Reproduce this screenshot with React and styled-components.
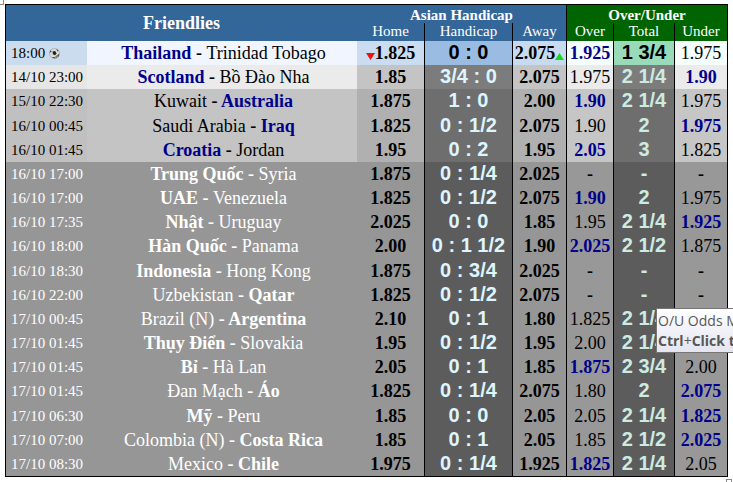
import React from "react";
import styled, { createGlobalStyle, css } from "styled-components";

const GlobalStyle = createGlobalStyle`
  body {
    margin: 0;
    background: #fff;
    font-family: "Liberation Serif", "Times New Roman", serif;
  }
`;

const tones = {
  live: {
    time: "#cadcee",
    teams: "#f0f5ff",
    home: "#cadcf0",
    handicap: "#9abce2",
    away: "#c8daf0",
    odds: "#f5fdfd",
    total: "#99dbb9",
    text: "#000",
    handicapText: "#000",
    totalText: "#000"
  },
  next: {
    time: "#e6e6e6",
    teams: "#ebebeb",
    home: "#c4c4c4",
    handicap: "#7c7c7c",
    away: "#c4c4c4",
    odds: "#ebebeb",
    total: "#7c7c7c",
    text: "#000",
    handicapText: "#dcf5ff",
    totalText: "#cdebe0"
  },
  soon: {
    time: "#c0c0c0",
    teams: "#c4c4c4",
    home: "#b0b0b0",
    handicap: "#6e6e6e",
    away: "#b0b0b0",
    odds: "#c6c6c6",
    total: "#6e6e6e",
    text: "#000",
    handicapText: "#dcf5ff",
    totalText: "#cdebe0"
  },
  later: {
    time: "#969696",
    teams: "#969696",
    home: "#969696",
    handicap: "#5c5c5c",
    away: "#969696",
    odds: "#989898",
    total: "#5c5c5c",
    text: "#fff",
    handicapText: "#dcf5ff",
    totalText: "#cdebe0"
  }
};

const Page = styled.main`
  position: relative;
  padding: 4px 5px 6px;
  overflow: hidden;
`;

const Board = styled.table`
  width: 100%;
  table-layout: fixed;
  border-collapse: separate;
  border-spacing: 0;
  border: 1px solid #000;
  box-sizing: border-box;
`;

const Col = styled.col`
  width: ${props => props.$width};
`;

const HeadCell = styled.th`
  padding: 0;
  height: 18px;
  font-size: 15px;
  line-height: 16px;
  font-weight: ${props => (props.$sub ? "normal" : "bold")};
  vertical-align: ${props => (props.$sub ? "top" : "bottom")};
  color: #fff;
  background: ${props => (props.$green ? "#006400" : "#336699")};
  white-space: nowrap;
  ${props =>
    props.$line &&
    css`
      border-left: 1px solid #000;
    `}
`;

const League = styled(HeadCell)`
  font-size: 18px;
  vertical-align: middle;
`;

const Row = styled.tr`
  height: 24px;
  &:nth-child(6n + 4) {
    height: 25px;
  }
`;

const Cell = styled.td`
  padding: 0;
  text-align: center;
  white-space: nowrap;
  line-height: 22px;
  font-size: 18px;
`;

const TimeCell = styled(Cell)`
  padding-left: 5px;
  text-align: left;
  font-size: 15px;
  background: ${props => tones[props.$tone].time};
  color: ${props => tones[props.$tone].text};
`;

const TeamsCell = styled(Cell)`
  padding-left: 3px;
  background: ${props => tones[props.$tone].teams};
  color: ${props => tones[props.$tone].text};
`;

const Team = styled.span`
  font-weight: ${props => (props.$favourite ? "bold" : "normal")};
  color: ${props =>
    props.$favourite && props.$tone !== "later" ? "#00008b" : "inherit"};
`;

const OddsCell = styled(Cell)`
  font-weight: ${props => (props.$bold ? "bold" : "normal")};
  color: ${props =>
    props.$low ? "#00008b" : "#000"};
  background: ${props => tones[props.$tone][props.$kind]};
  ${props =>
    props.$line &&
    css`
      border-left: 1px solid #000;
    `}
`;

const LineCell = styled(Cell)`
  padding-bottom: 2px;
  border-left: 1px solid #000;
  font-family: "Liberation Sans", Arial, sans-serif;
  font-size: 20px;
  font-weight: bold;
  background: ${props => tones[props.$tone][props.$kind]};
  color: ${props => tones[props.$tone][`${props.$kind}Text`]};
`;

const Ball = styled.svg`
  width: 11px;
  height: 11px;
  margin-left: 4px;
  vertical-align: -1px;
`;

const Arrow = styled.svg`
  width: 9px;
  height: 7px;
  vertical-align: -1px;
`;

const Tooltip = styled.div`
  position: absolute;
  top: 308px;
  right: 0;
  width: 77px;
  height: 45px;
  box-sizing: border-box;
  padding: 2px 0 0 1px;
  overflow: hidden;
  border: 1px solid #767676;
  border-right: 0;
  background: linear-gradient(#fff, #e4e5f0);
  color: #575757;
  font-family: "Open Sans", "Noto Sans", sans-serif;
  font-size: 14px;
  line-height: 20px;
  white-space: nowrap;
`;

const MoveHandle = styled.span`
  position: absolute;
  top: 0;
  left: 0;
  width: 3px;
  height: 4px;
  border: solid #8a8a8a;
  border-width: 0 1px 1px 0;
`;

const SizeHandle = styled.span`
  position: absolute;
  right: 1px;
  bottom: 0;
  width: 4px;
  height: 3px;
  border: 1px solid #8a8a8a;
  border-bottom: 0;
`;

// [tone, time, first team, second team, favourite, home, handicap, away, over, total, under, low side]
const matches = [
  ["live", "18:00", "Thailand", "Trinidad Tobago", 1, "1.825", "0 : 0", "2.075", "1.925", "1 3/4", "1.975", "over"],
  ["next", "14/10 23:00", "Scotland", "Bồ Đào Nha", 1, "1.85", "3/4 : 0", "2.075", "1.975", "2 1/4", "1.90", "under"],
  ["soon", "15/10 22:30", "Kuwait", "Australia", 2, "1.875", "1 : 0", "2.00", "1.90", "2 1/4", "1.975", "over"],
  ["soon", "16/10 00:45", "Saudi Arabia", "Iraq", 2, "1.825", "0 : 1/2", "2.075", "1.90", "2", "1.975", "under"],
  ["soon", "16/10 01:45", "Croatia", "Jordan", 1, "1.95", "0 : 2", "1.95", "2.05", "3", "1.825", "over"],
  ["later", "16/10 17:00", "Trung Quốc", "Syria", 1, "1.875", "0 : 1/4", "2.025", "-", "-", "-", ""],
  ["later", "16/10 17:00", "UAE", "Venezuela", 1, "1.825", "0 : 1/2", "2.075", "1.90", "2", "1.975", "over"],
  ["later", "16/10 17:35", "Nhật", "Uruguay", 1, "2.025", "0 : 0", "1.85", "1.95", "2 1/4", "1.925", "under"],
  ["later", "16/10 18:00", "Hàn Quốc", "Panama", 1, "2.00", "0 : 1 1/2", "1.90", "2.025", "2 1/2", "1.875", "over"],
  ["later", "16/10 18:30", "Indonesia", "Hong Kong", 1, "1.875", "0 : 3/4", "2.025", "-", "-", "-", ""],
  ["later", "16/10 22:00", "Uzbekistan", "Qatar", 2, "1.825", "0 : 1/2", "2.075", "-", "-", "-", ""],
  ["later", "17/10 00:45", "Brazil (N)", "Argentina", 2, "2.10", "0 : 1", "1.80", "1.825", "2 1/4", "", ""],
  ["later", "17/10 01:45", "Thụy Điển", "Slovakia", 1, "1.95", "0 : 1/2", "1.95", "2.00", "2 1/4", "", ""],
  ["later", "17/10 01:45", "Bỉ", "Hà Lan", 1, "2.05", "0 : 1", "1.85", "1.875", "2 3/4", "2.00", "over"],
  ["later", "17/10 01:45", "Đan Mạch", "Áo", 2, "1.825", "0 : 1/4", "2.075", "1.80", "2", "2.075", "under"],
  ["later", "17/10 06:30", "Mỹ", "Peru", 1, "1.85", "0 : 0", "2.05", "2.05", "2 1/4", "1.825", "under"],
  ["later", "17/10 07:00", "Colombia (N)", "Costa Rica", 2, "1.85", "0 : 1", "2.05", "1.85", "2 1/2", "2.025", "under"],
  ["later", "17/10 08:30", "Mexico", "Chile", 2, "1.975", "0 : 1/4", "1.925", "1.825", "2 1/4", "2.05", "over"]
];

const BallIcon = () => (
  <Ball viewBox="0 0 11 11" aria-hidden="true">
    <circle cx="5.5" cy="5.5" r="5" fill="#dcdcdc" stroke="#9a9a9a" strokeWidth="0.6" />
    <path d="M3.6 3.6 6.2 3 7.6 5.4 6 7.2 3.8 6.2Z" fill="#222" />
    <path d="M0.6 4.6 1.8 2 2.6 4ZM7 0.8 9.6 2.4 8.8 3.6ZM2.6 9.4 5.4 9 6.4 10.6ZM8.4 7.4 10.4 5.4 9.4 9Z" fill="#333" />
    <path d="M6.4 8.2 9.6 6 8.4 9.4 6.4 10.4Z" fill="#777" />
  </Ball>
);

const DownIcon = () => (
  <Arrow viewBox="0 0 9 7" aria-hidden="true">
    <path d="M0 0H9L4.5 7Z" fill="#ee1111" />
  </Arrow>
);

const UpIcon = () => (
  <Arrow viewBox="0 0 9 7" aria-hidden="true">
    <path d="M0 7H9L4.5 0Z" fill="#11dd11" />
  </Arrow>
);

const Match = ({ match }) => {
  const [tone, time, first, second, favourite, home, handicap, away, over, total, under, low] = match;
  const live = tone === "live";
  const empty = over === "-";
  return (
    <Row>
      <TimeCell $tone={tone}>
        {time}
        {live && <BallIcon />}
      </TimeCell>
      <TeamsCell $tone={tone}>
        <Team $tone={tone} $favourite={favourite === 1}>{first}</Team>
        <b> - </b>
        <Team $tone={tone} $favourite={favourite === 2}>{second}</Team>
      </TeamsCell>
      <OddsCell $tone={tone} $kind="home" $bold>
        {live && <DownIcon />}
        {home}
      </OddsCell>
      <LineCell $tone={tone} $kind="handicap">{handicap}</LineCell>
      <OddsCell $tone={tone} $kind="away" $bold $line>
        {away}
        {live && <UpIcon />}
      </OddsCell>
      <OddsCell $tone={tone} $kind="odds" $line $bold={empty || low === "over"} $low={low === "over"}>
        {over}
      </OddsCell>
      <LineCell $tone={tone} $kind="total">{total}</LineCell>
      <OddsCell $tone={tone} $kind="odds" $line $bold={empty || low === "under"} $low={low === "under"}>
        {under}
      </OddsCell>
    </Row>
  );
};

export default () => (
  <Page>
    <GlobalStyle />
    <Board>
      <colgroup>
        <Col $width="81px" />
        <Col />
        <Col $width="67px" />
        <Col $width="88px" />
        <Col $width="54px" />
        <Col $width="47px" />
        <Col $width="61px" />
        <Col $width="53px" />
      </colgroup>
      <thead>
        <tr>
          <League colSpan="2" rowSpan="2">Friendlies</League>
          <HeadCell colSpan="3">Asian Handicap</HeadCell>
          <HeadCell colSpan="3" $green $line>Over/Under</HeadCell>
        </tr>
        <tr>
          <HeadCell $sub>Home</HeadCell>
          <HeadCell $sub $line>Handicap</HeadCell>
          <HeadCell $sub $line>Away</HeadCell>
          <HeadCell $sub $green $line>Over</HeadCell>
          <HeadCell $sub $green $line>Total</HeadCell>
          <HeadCell $sub $green $line>Under</HeadCell>
        </tr>
      </thead>
      <tbody>
        {matches.map((match, index) => (
          <Match key={index} match={match} />
        ))}
      </tbody>
    </Board>
    <Tooltip role="tooltip">
      O/U Odds M
      <br />
      <b>Ctrl</b>+<b>Click t</b>
    </Tooltip>
    <MoveHandle />
    <SizeHandle />
  </Page>
);
